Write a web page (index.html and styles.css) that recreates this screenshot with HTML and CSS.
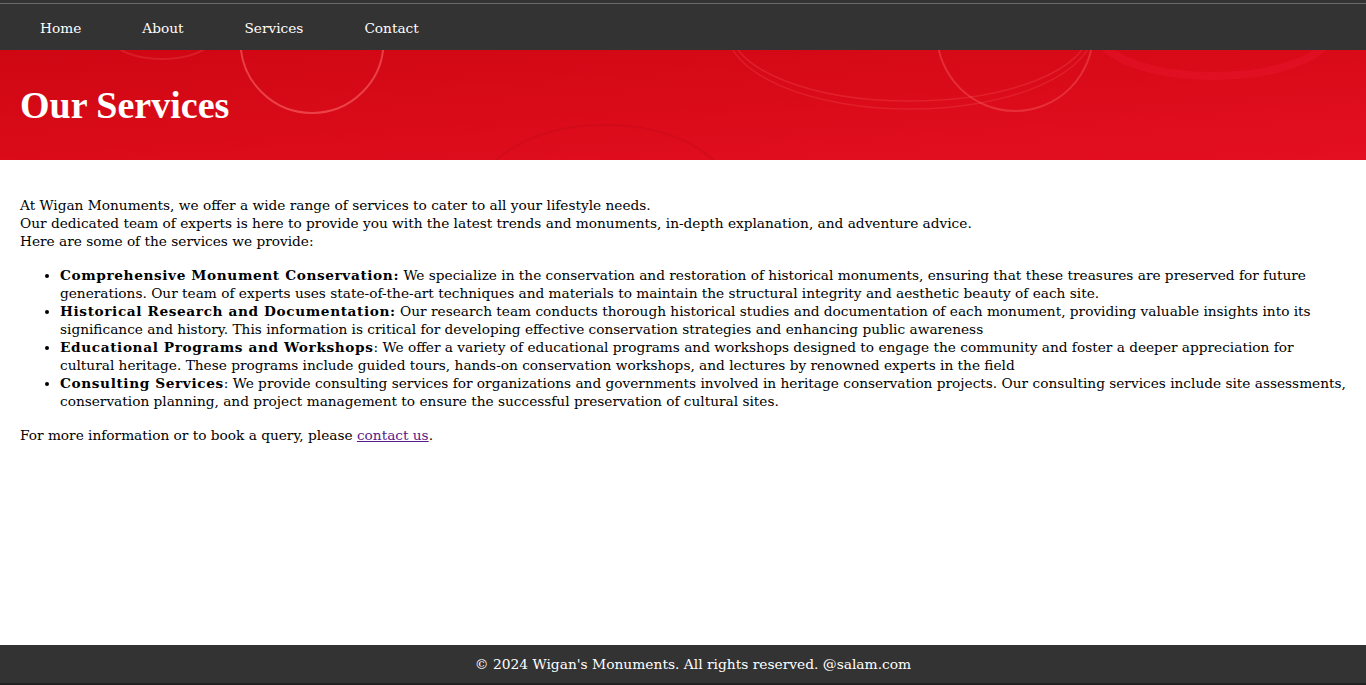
FILE: index.html
```html
<!DOCTYPE html>
<html lang="en">
<head>
<meta charset="utf-8">
<title>Our Services - Wigan's Monuments</title>
<link rel="stylesheet" href="styles.css">
</head>
<body>
<div class="page">
  <nav class="topnav">
    <a href="#">Home</a>
    <a href="#">About</a>
    <a href="#">Services</a>
    <a href="#">Contact</a>
  </nav>
  <header class="banner">
    <svg class="banner-art" viewBox="0 0 1366 110" preserveAspectRatio="none" aria-hidden="true">
      <circle cx="312" cy="-8.5" r="71.5" fill="none" stroke="rgba(255,120,120,0.5)" stroke-width="2"/>
      <ellipse cx="162" cy="-10" rx="48" ry="19" fill="none" stroke="rgba(255,120,120,0.2)" stroke-width="2"/>
      <ellipse cx="910" cy="-20" rx="179" ry="71" fill="none" stroke="rgba(255,120,120,0.2)" stroke-width="1.5"/>
      <ellipse cx="910" cy="-20" rx="183" ry="79" fill="none" stroke="rgba(255,120,120,0.18)" stroke-width="1.5"/>
      <circle cx="1015" cy="-17" r="78" fill="none" stroke="rgba(255,120,120,0.32)" stroke-width="2"/>
      <ellipse cx="1214" cy="-20" rx="118" ry="46" fill="none" stroke="rgba(240,25,55,0.3)" stroke-width="8"/>
      <ellipse cx="605" cy="145" rx="125" ry="70" fill="none" stroke="rgba(190,10,25,0.3)" stroke-width="2"/>
    </svg>
    <h1>Our Services</h1>
  </header>
  <main class="content">
    <p class="intro">At Wigan Monuments, we offer a wide range of services to cater to all your lifestyle needs.<br>
    Our dedicated team of experts is here to provide you with the latest trends and monuments, in-depth explanation, and adventure advice.<br>
    Here are some of the services we provide:</p>
    <ul class="services">
      <li><strong>Comprehensive Monument Conservation:</strong> We specialize in the conservation and restoration of historical monuments, ensuring that these treasures are preserved for future generations. Our team of experts uses state-of-the-art techniques and materials to maintain the structural integrity and aesthetic beauty of each site.</li>
      <li><strong>Historical Research and Documentation:</strong> Our research team conducts thorough historical studies and documentation of each monument, providing valuable insights into its significance and history. This information is critical for developing effective conservation strategies and enhancing public awareness</li>
      <li><strong>Educational Programs and Workshops</strong>: We offer a variety of educational programs and workshops designed to engage the community and foster a deeper appreciation for cultural heritage. These programs include guided tours, hands-on conservation workshops, and lectures by renowned experts in the field</li>
      <li><strong>Consulting Services</strong>: We provide consulting services for organizations and governments involved in heritage conservation projects. Our consulting services include site assessments, conservation planning, and project management to ensure the successful preservation of cultural sites.</li>
    </ul>
    <p class="outro">For more information or to book a query, please <a href="#">contact us</a>.</p>
  </main>
  <footer class="footer">
    <p>© 2024 Wigan's Monuments. All rights reserved. @salam.com</p>
  </footer>
</div>
</body>
</html>
```

FILE: styles.css
```css
html, body {
  margin: 0;
  padding: 0;
  height: 100%;
}
body {
  font-family: "DejaVu Serif", "Liberation Serif", serif;
  font-size: 13.7px;
  color: #000;
  background: #fff;
}
.page {
  min-height: 100%;
  display: flex;
  flex-direction: column;
}
.topnav {
  background: #333;
  border-top: 1px solid #6a6a6a;
  margin-top: 3px;
  box-shadow: 0 -3px 0 #333;
  height: 46px;
  display: flex;
  align-items: center;
  padding-left: 40px;
  gap: 61px;
}
.topnav a {
  color: #fff;
  text-decoration: none;
  font-size: 13.7px;
  padding-top: 1px;
}
.banner {
  position: relative;
  height: 110px;
  background: linear-gradient(176deg, #cf0713 0%, #da0b19 50%, #e40f21 100%);
  overflow: hidden;
  display: flex;
  align-items: center;
}
.banner-art {
  position: absolute;
  inset: 0;
  width: 100%;
  height: 100%;
}
.banner h1 {
  position: relative;
  margin: 0 0 0 20px;
  color: #fff;
  font-family: "Liberation Serif", serif;
  font-size: 38px;
  font-weight: bold;
}
.content {
  flex: 1;
  padding: 36px 20px 0;
  line-height: 18px;
}
.content p { margin: 0; }
.services {
  margin: 16px 0 16px;
  padding-left: 40px;
}
.services strong {
  display: inline-block;
  line-height: 18px;
  letter-spacing: 0.6px;
}
.outro a { color: #551a8b; }
.footer {
  background: #333;
  color: #fff;
  height: 38px;
  display: flex;
  align-items: center;
  justify-content: center;
  padding-left: 20px;
  border-bottom: 2px solid #222;
}
.footer p { margin: 0; font-size: 13.8px; }
```
